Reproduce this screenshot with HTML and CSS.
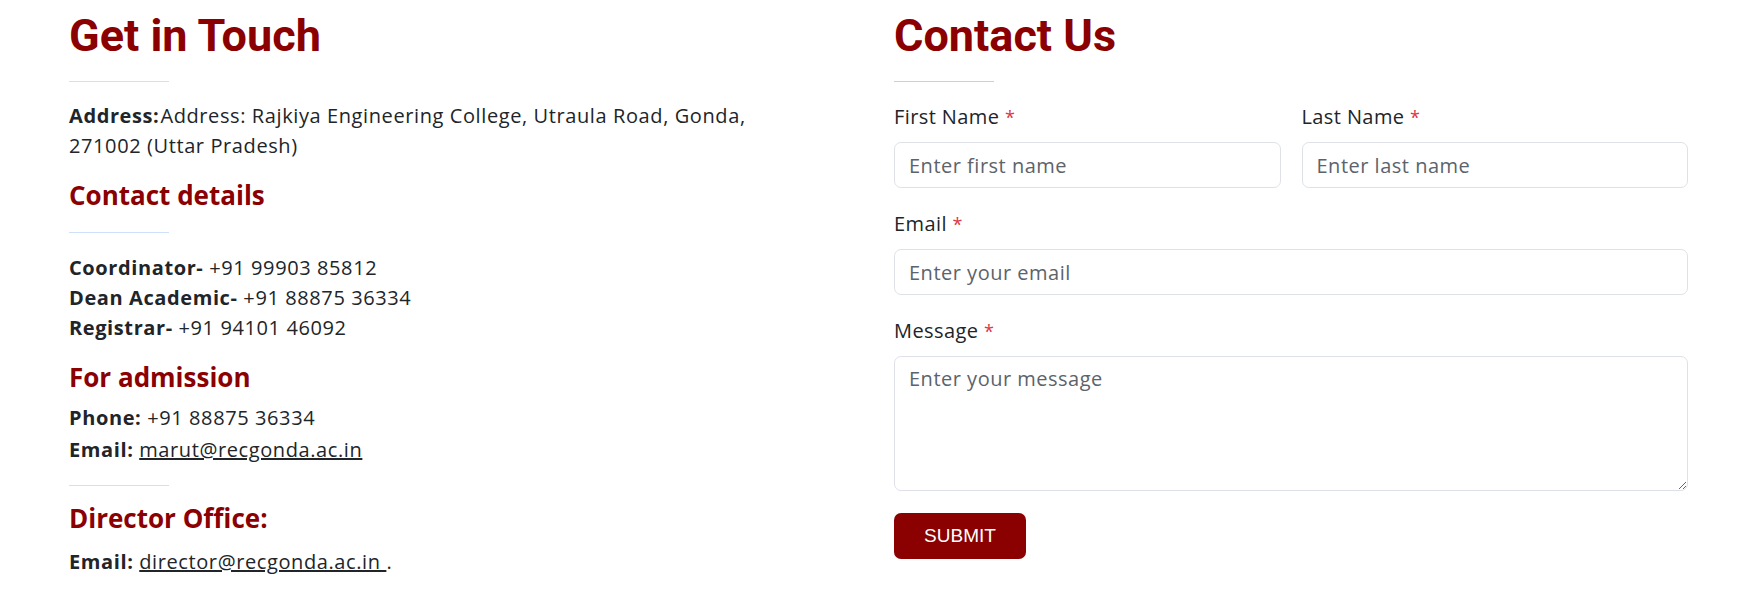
FILE: index.html
```html
<!DOCTYPE html>
<html lang="en">
<head>
<meta charset="utf-8">
<title>Contact</title>
<link rel="stylesheet" href="styles.css">
</head>
<body>
<div class="contact-section">
  <div class="info-col">
    <h1 class="title">Get in Touch</h1>
    <div class="divider divider-blue"></div>
    <p class="address"><b class="addr-key">Address:</b>Address: Rajkiya Engineering College, Utraula Road, Gonda, 271002 (Uttar Pradesh)</p>

    <h4 class="sub sub-details">Contact details</h4>
    <div class="divider divider-blue divider-mid"></div>
    <p class="lines"><b>Coordinator-</b> +91 99903 85812<br><b>Dean Academic-</b> +91 88875 36334<br><b>Registrar-</b> +91 94101 46092</p>

    <h4 class="sub sub-admission">For admission</h4>
    <p class="line line-phone"><b>Phone:</b> +91 88875 36334</p>
    <p class="line line-email"><b>Email:</b> <a href="#">marut@recgonda.ac.in</a></p>
    <div class="divider divider-blue divider-low"></div>

    <h4 class="sub sub-director">Director Office:</h4>
    <p class="line line-director"><b>Email:</b> <a href="#">director@recgonda.ac.in </a>.</p>
  </div>

  <div class="form-col">
    <h1 class="title">Contact Us</h1>
    <div class="divider divider-gray"></div>
    <form class="form">
      <div class="row-2">
        <div class="group">
          <label class="label">First Name <span class="req">*</span></label>
          <input class="field" type="text" placeholder="Enter first name">
        </div>
        <div class="group">
          <label class="label">Last Name <span class="req">*</span></label>
          <input class="field" type="text" placeholder="Enter last name">
        </div>
      </div>
      <div class="group">
        <label class="label">Email <span class="req">*</span></label>
        <input class="field" type="email" placeholder="Enter your email">
      </div>
      <div class="group group-msg">
        <label class="label">Message <span class="req">*</span></label>
        <textarea class="field area" placeholder="Enter your message"></textarea>
      </div>
      <button class="submit" type="button">SUBMIT</button>
    </form>
  </div>
</div>
</body>
</html>
```

FILE: styles.css
```css
* { box-sizing: border-box; }

html, body {
  margin: 0;
  padding: 0;
  background: #ffffff;
}

body {
  font-family: "Open Sans", "Liberation Sans", sans-serif;
  color: #212529;
  font-size: 20px;
  line-height: 30px;
  letter-spacing: 0.6px;
}

.contact-section {
  display: grid;
  grid-template-columns: 801px 794px;
  column-gap: 24px;
  padding: 9px 0 0 69px;
}

.title {
  margin: 0;
  font-family: Roboto, "Open Sans", sans-serif;
  font-size: 45px;
  line-height: 54px;
  font-weight: 700;
  letter-spacing: 0;
  color: #8b0000;
}

.divider {
  width: 100px;
  height: 1px;
  margin: 18px 0 19px;
}

.divider-blue { background: #cfe0fb; }
.divider-gray { background: #cfcfcf; }

.address {
  margin: 0;
  max-width: 700px;
}

b { font-weight: 700; }

.addr-key { margin-right: 1px; }

.sub {
  margin: 0;
  font-size: 26px;
  line-height: 31px;
  font-weight: 700;
  letter-spacing: 0;
  color: #8b0000;
}

.sub-details { margin-top: 19px; }
.divider-mid { margin: 21px 0 20px; }

.lines { margin: 0; }

.sub-admission { margin-top: 19px; }

.line { margin: 0; }
.line-phone { margin-top: 10px; }
.line-email { margin-top: 2px; }

.divider-low { margin: 20px 0 17px; }

.line-director { margin-top: 13px; }

a {
  color: #212529;
  text-decoration: underline;
}

.row-2 {
  display: grid;
  grid-template-columns: 1fr 1fr;
  column-gap: 21px;
}

.group {
  display: flex;
  flex-direction: column;
  margin-bottom: 20px;
}

.label {
  margin-bottom: 10px;
  padding-top: 1px;
  font-size: 20px;
  line-height: 30px;
  letter-spacing: 0.4px;
}

.req {
  color: #dc3545;
  font-size: 18px;
}

.field {
  height: 46px;
  padding: 0 14px;
  border: 1px solid #dee2e6;
  border-radius: 7px;
  font-family: inherit;
  font-size: 20px;
  letter-spacing: 0.5px;
  color: #212529;
  background: #fff;
  outline: none;
}

.field::placeholder { color: #5c636b; }

.area {
  height: 135px;
  padding: 7px 14px;
  line-height: 30px;
  resize: vertical;
}

.group-msg { margin-bottom: 22px; }

.submit {
  width: 132px;
  height: 46px;
  border: 0;
  border-radius: 7px;
  background: #8b0000;
  color: #ffffff;
  font-family: "Liberation Sans", Arial, sans-serif;
  font-size: 19px;
  letter-spacing: 0;
  cursor: pointer;
}
```
